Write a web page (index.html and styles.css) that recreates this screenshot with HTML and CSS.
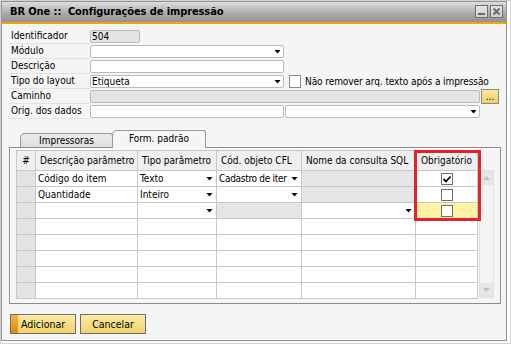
FILE: index.html
```html
<!DOCTYPE html>
<html lang="pt">
<head>
    <meta charset="UTF-8">
    <title>BR One :: Configurações de impressão</title>
    <link rel="stylesheet" href="styles.css">
</head>
<body>
    <div class="window">
        <div class="frame">
            <div class="titlebar">
                <span class="title">BR One ::&nbsp; Configurações de impressão</span>
                <div class="win-btns">
                    <span class="win-btn">
                        <svg width="11" height="11" viewBox="0 0 11 11"><rect x="2" y="7" width="7" height="2" fill="#6b6b6b"/></svg>
                    </span>
                    <span class="win-btn">
                        <svg width="11" height="11" viewBox="0 0 11 11"><path d="M2.5 2.5l6 6M8.5 2.5l-6 6" stroke="#6b6b6b" stroke-width="2"/></svg>
                    </span>
                </div>
            </div>

            <div class="content">
                <div class="form">
                    <div class="form-row">
                        <label class="lbl">Identificador</label>
                        <div class="field field-id readonly">504</div>
                    </div>
                    <div class="form-row">
                        <label class="lbl">Módulo</label>
                        <div class="field field-md select"><span></span><span class="arrow"></span></div>
                    </div>
                    <div class="form-row">
                        <label class="lbl">Descrição</label>
                        <div class="field field-md"></div>
                    </div>
                    <div class="form-row">
                        <label class="lbl">Tipo do layout</label>
                        <div class="field field-md select"><span>Etiqueta</span><span class="arrow"></span></div>
                        <span class="check"></span>
                        <span class="check-label">Não remover arq. texto após a impressão</span>
                    </div>
                    <div class="form-row">
                        <label class="lbl">Caminho</label>
                        <div class="field field-wide readonly"></div>
                        <button class="browse">...</button>
                    </div>
                    <div class="form-row">
                        <label class="lbl">Orig. dos dados</label>
                        <div class="field field-md"></div>
                        <div class="field field-md2 select"><span></span><span class="arrow"></span></div>
                    </div>
                </div>

                <div class="tabs">
                    <div class="tab">Impressoras</div>
                    <div class="tab active">Form. padrão</div>
                </div>

                <div class="panel">
                    <div class="grid-wrap">
                        <div class="grid">
                            <div class="cell head center">#</div>
                            <div class="cell head">Descrição parâmetro</div>
                            <div class="cell head">Tipo parâmetro</div>
                            <div class="cell head">Cód. objeto CFL</div>
                            <div class="cell head">Nome da consulta SQL</div>
                            <div class="cell head center">Obrigatório</div>

                            <div class="cell num"></div>
                            <div class="cell">Código do item</div>
                            <div class="cell sel"><span class="txt">Texto</span><span class="arrow"></span></div>
                            <div class="cell sel"><span class="txt tight">Cadastro de iter</span><span class="arrow"></span></div>
                            <div class="cell off"></div>
                            <div class="cell center"><span class="gcheck checked"><svg width="10" height="10" viewBox="0 0 10 10"><path d="M1.5 5l2.5 2.5 4.5-5" fill="none" stroke="#000" stroke-width="1.8"/></svg></span></div>

                            <div class="cell num"></div>
                            <div class="cell">Quantidade</div>
                            <div class="cell sel"><span class="txt">Inteiro</span><span class="arrow"></span></div>
                            <div class="cell sel"><span class="txt"></span><span class="arrow"></span></div>
                            <div class="cell off"></div>
                            <div class="cell center"><span class="gcheck"></span></div>

                            <div class="cell num"></div>
                            <div class="cell"></div>
                            <div class="cell sel"><span class="txt"></span><span class="arrow"></span></div>
                            <div class="cell off"></div>
                            <div class="cell sel"><span class="txt"></span><span class="arrow"></span></div>
                            <div class="cell center edit"><span class="gcheck"></span></div>

                            <div class="cell num"></div><div class="cell"></div><div class="cell"></div><div class="cell"></div><div class="cell"></div><div class="cell"></div>
                            <div class="cell num"></div><div class="cell"></div><div class="cell"></div><div class="cell"></div><div class="cell"></div><div class="cell"></div>
                            <div class="cell num"></div><div class="cell"></div><div class="cell"></div><div class="cell"></div><div class="cell"></div><div class="cell"></div>
                            <div class="cell num"></div><div class="cell"></div><div class="cell"></div><div class="cell"></div><div class="cell"></div><div class="cell"></div>
                            <div class="cell num"></div><div class="cell"></div><div class="cell"></div><div class="cell"></div><div class="cell"></div><div class="cell"></div>
                        </div>
                        <div class="highlight"></div>
                    </div>
                    <div class="scrollbar">
                        <span class="sb-btn"><span class="sb-arrow up"></span></span>
                        <span class="sb-btn"><span class="sb-arrow"></span></span>
                    </div>
                </div>

                <div class="actions">
                    <button class="btn btn-primary">Adicionar</button>
                    <button class="btn">Cancelar</button>
                </div>
            </div>
        </div>
    </div>
</body>
</html>
```

FILE: styles.css
```css
* {
    box-sizing: border-box;
}

html, body {
    margin: 0;
    padding: 0;
}

body {
    font-family: "DejaVu Sans Condensed", "DejaVu Sans", sans-serif;
    font-size: 10px;
    color: #000;
    background: #fff;
}

.window {
    width: 511px;
    height: 344px;
    border: 1px solid #d2d2d2;
    padding: 0 3px 2px 0;
    background: #fff;
    display: flex;
}

.frame {
    flex: 1;
    border: 1px solid #929292;
    background: #f5f5f5;
    display: flex;
    flex-direction: column;
}

/* title bar */
.titlebar {
    height: 22px;
    display: flex;
    align-items: center;
    padding: 0 3px 2px 8px;
    background: linear-gradient(#dedede, #ababab 55%, #919191);
    border-bottom: 2px solid #f0a800;
}

.title {
    font-weight: bold;
    font-size: 11px;
    letter-spacing: -0.1px;
}

.win-btns {
    margin-left: auto;
    display: flex;
    gap: 2px;
}

.win-btn {
    width: 13px;
    height: 13px;
    border: 1px solid #6f6f6f;
    background: linear-gradient(#e4e4e4, #cfcfcf);
    display: flex;
    align-items: center;
    justify-content: center;
}

.content {
    padding: 5px 0 0 7px;
}

/* header form */
.form-row {
    display: flex;
    height: 15px;
}

.lbl {
    width: 81px;
    height: 15px;
    line-height: 14px;
    padding-left: 2px;
    border-bottom: 1px solid #e2e2e2;
}

.field {
    margin-top: 1px;
    height: 13px;
    border: 1px solid #bababa;
    border-radius: 2px;
    background: #fff;
    line-height: 11px;
    padding: 0 2px 0 1px;
}

.field.readonly {
    background: #e4e4e4;
}

.field.select {
    display: flex;
    align-items: center;
    justify-content: space-between;
}

.field-id {
    width: 50px;
}

.field-md {
    width: 194px;
}

.field-md2 {
    width: 195px;
    margin-left: 1px;
}

.field-wide {
    width: 390px;
}

.arrow {
    width: 7px;
    height: 4px;
    flex-shrink: 0;
    background: #000;
    clip-path: polygon(0 0, 100% 0, 50% 100%);
}

.check {
    width: 12px;
    height: 13px;
    margin: 1px 0 0 5px;
    border: 1px solid #8a8a8a;
    background: #fff;
}

.check-label {
    margin-left: 4px;
    line-height: 15px;
    letter-spacing: -0.08px;
}

.browse {
    width: 18px;
    height: 15px;
    margin-left: 1px;
    padding: 0;
    border: 1px solid #8a8a8a;
    background: linear-gradient(#fbe9a4, #f1d160);
    font-family: inherit;
    font-size: 10px;
    line-height: 10px;
}

/* tabs */
.tabs {
    display: flex;
    align-items: flex-end;
    height: 17px;
    margin-top: 11px;
    padding-left: 11px;
}

.tab {
    width: 93px;
    height: 14px;
    border: 1px solid #9a9a9a;
    border-bottom: none;
    border-radius: 5px 3px 0 0;
    background: linear-gradient(#ececec, #dddddd);
    text-align: center;
    line-height: 13px;
}

.tab.active {
    width: 94px;
    height: 18px;
    margin: 0 0 -1px -1px;
    background: #f5f5f5;
    line-height: 16px;
    position: relative;
}

/* grid panel */
.panel {
    width: 492px;
    height: 157px;
    border: 1px solid #8c8c8c;
    box-shadow: inset 1px 1px 0 #fff;
    padding: 2px 0 0 6px;
    display: flex;
    align-items: flex-start;
}

.grid-wrap {
    position: relative;
}

.grid {
    display: grid;
    grid-template-columns: 19px 102px 79px 85px 114px 62px;
    grid-template-rows: 20px;
    grid-auto-rows: 16px;
    border-left: 1px solid #c8c8c8;
    border-top: 1px solid #c8c8c8;
    background: #fff;
}

.cell {
    border-right: 1px solid #c8c8c8;
    border-bottom: 1px solid #c8c8c8;
    display: flex;
    align-items: center;
    padding: 0 3px 0 2px;
    white-space: nowrap;
    overflow: hidden;
}

.cell.head {
    background: #efefef;
    padding-left: 4px;
}

.cell.center {
    justify-content: center;
    padding: 0;
}

.cell.sel {
    justify-content: space-between;
}

.cell .txt {
    flex: 1;
    margin-right: 2px;
}

.cell .txt.tight {
    letter-spacing: -0.3px;
    margin-right: 1px;
}

.cell.num {
    background: #e3e3e3;
}

.cell.off {
    background: #e6e6e6;
}

.cell.edit {
    background: #fef2a4;
}

.gcheck {
    width: 12px;
    height: 12px;
    border: 1px solid #6f6f6f;
    background: #fff;
    display: flex;
    align-items: center;
    justify-content: center;
}

.highlight {
    position: absolute;
    left: 398px;
    top: 0;
    width: 67px;
    height: 71px;
    border: 3px solid #e8202a;
    pointer-events: none;
}

.scrollbar {
    width: 15px;
    height: 128px;
    margin: 20px 0 0 1px;
    background: #f3f3f3;
    border: 1px solid #e0e0e0;
    display: flex;
    flex-direction: column;
    justify-content: space-between;
}

.sb-btn {
    height: 14px;
    background: #e6e6e6;
    display: flex;
    align-items: center;
    justify-content: center;
}

.sb-arrow {
    width: 7px;
    height: 4px;
    background: #c2c2c2;
    clip-path: polygon(0 0, 100% 0, 50% 100%);
}

.sb-arrow.up {
    clip-path: polygon(50% 0, 100% 100%, 0 100%);
}

/* buttons */
.actions {
    display: flex;
    gap: 4px;
    margin-top: 10px;
    padding-left: 1px;
}

.btn {
    width: 66px;
    height: 20px;
    padding: 0;
    border: 1px solid #6d6d6d;
    background: linear-gradient(#fbeaa8, #f3d467);
    font-family: inherit;
    font-size: 10.5px;
    color: #000;
}

.btn-primary {
    background:
        linear-gradient(#f7b436, #e8840c) no-repeat 0 0 / 7px 100%,
        linear-gradient(#fbeaa8, #f3d467);
}
```
